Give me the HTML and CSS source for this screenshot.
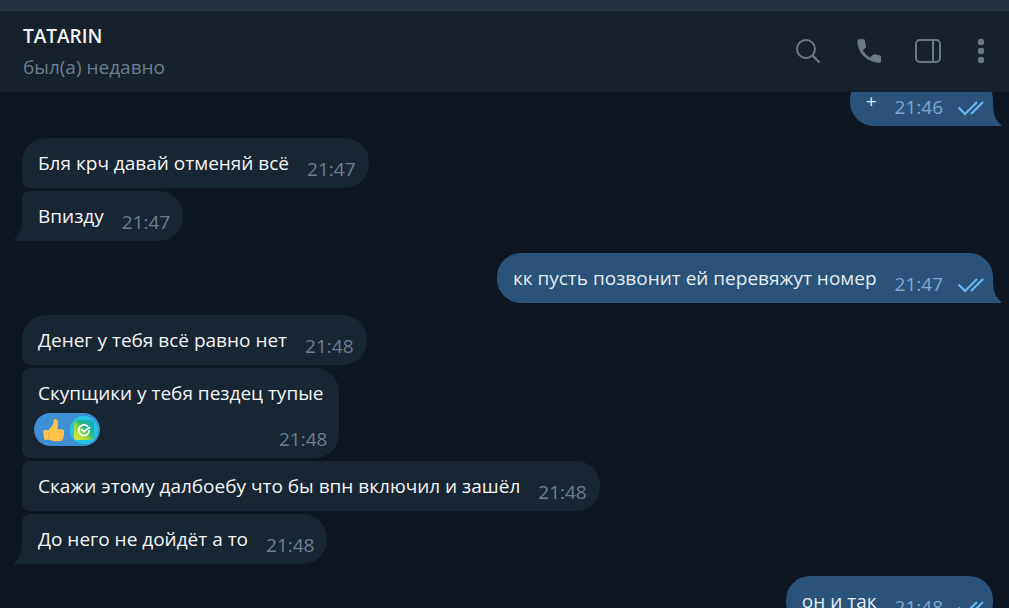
FILE: index.html
```html
<!DOCTYPE html>
<html lang="ru">
<head>
<meta charset="utf-8">
<meta name="viewport" content="width=device-width, initial-scale=1">
<title>TATARIN</title>
<link rel="stylesheet" href="styles.css">
</head>
<body>
<svg class="defs" aria-hidden="true">
  <symbol id="tail" viewBox="0 0 10 22"><path d="M0 0V22H8.200Q9 21.300 7.800 20.600Q0 15 0 0Z"/></symbol>
  <symbol id="checks" viewBox="0 0 28 18"><path d="M1.500 8.500L8 15L20 3M14 15L26 3" fill="none" stroke="currentColor" stroke-width="2.200"/></symbol>
</svg>
<div class="titlebar"></div>
<header class="header">
  <div class="contact">
    <h1 class="name">TATARIN</h1>
    <p class="status">был(а) недавно</p>
  </div>
  <div class="actions">
    <button class="action" type="button" aria-label="Поиск">
      <svg viewBox="0 0 32 32"><circle cx="13" cy="13" r="9" fill="none" stroke="currentColor" stroke-width="2"/><path d="M19.500 19.500L26.500 26.500" stroke="currentColor" stroke-width="2.400"/></svg>
    </button>
    <button class="action" type="button" aria-label="Позвонить">
      <svg viewBox="0 0 32 32"><path transform="translate(-.5 -.7)" fill="currentColor" d="M6.400 4H11Q12.400 4 12.500 5.400Q12.700 8.200 13.500 10.600Q13.800 11.600 13 12.400L10.200 15.100Q13.400 20.200 17.600 22.200L20.400 19.400Q21.200 18.700 22.200 19Q24.500 19.700 27.200 19.900Q28.600 20 28.600 21.400V26Q28.600 27.500 27.100 27.500Q17.500 27.300 11 20.800Q5 14.500 4.900 5.600Q4.900 4 6.400 4Z"/></svg>
    </button>
    <button class="action" type="button" aria-label="Информация о чате">
      <svg viewBox="0 0 32 32" fill="none" stroke="currentColor" stroke-width="2"><rect x="3" y="4" width="24" height="22" rx="4"/><path d="M20 4V26"/></svg>
    </button>
    <button class="action narrow" type="button" aria-label="Меню">
      <svg viewBox="0 0 16 32" fill="currentColor"><circle cx="8" cy="6" r="3.200"/><circle cx="8" cy="15" r="3.200"/><circle cx="8" cy="24" r="3.200"/></svg>
    </button>
  </div>
</header>
<main class="chat">
  <div class="history">
    <section class="group outgoing">
      <article class="bubble last"><p class="text">+</p><time class="time">21:46</time><svg class="checks"><use href="#checks"/></svg><svg class="tail"><use href="#tail"/></svg></article>
    </section>
    <section class="group incoming">
      <article class="bubble first"><p class="text">Бля крч давай отменяй всё</p><time class="time">21:47</time></article>
      <article class="bubble last"><p class="text">Впизду</p><time class="time">21:47</time><svg class="tail"><use href="#tail"/></svg></article>
    </section>
    <section class="group outgoing">
      <article class="bubble last"><p class="text">кк пусть позвонит ей перевяжут номер</p><time class="time">21:47</time><svg class="checks"><use href="#checks"/></svg><svg class="tail"><use href="#tail"/></svg></article>
    </section>
    <section class="group incoming">
      <article class="bubble first"><p class="text">Денег у тебя всё равно нет</p><time class="time">21:48</time></article>
      <article class="bubble reacted">
        <p class="text">Скупщики у тебя пездец тупые</p>
        <div class="footer">
          <button class="reaction" type="button" aria-label="Реакция: нравится">
            <svg class="thumb" viewBox="0 0 24 24"><path fill="#ffc34d" d="M2.300 12Q1 12.300 1.200 13.800L2 20.500Q2.200 22 3.700 22L7 21.500Q10 23.500 14 23.300H18.500Q21 23 20.900 20.700Q22.300 19.500 21.500 17.900Q22.800 16.500 21.900 15Q23 12.500 20.700 11.500Q19.800 11 15.400 11.200Q16.600 6.500 15.800 3.200Q15 .8 12.900 1Q11.600 1.200 11.600 3Q11.800 6.800 8.400 9.700Q7.300 10.700 6.700 12.200Z"/><path fill="none" stroke="#f0a838" stroke-width=".8" d="M7 13V20.500M15.400 11.200Q14.800 13 15.500 14.300M17 15H21.500M16.800 18H21M16.600 20.800H20.500"/></svg>
            <svg class="avatar" viewBox="0 0 28 28"><defs><linearGradient id="sber" x1="0" y1="1" x2="1" y2="0"><stop offset="0" stop-color="#f5e532"/><stop offset=".35" stop-color="#9bdc40"/><stop offset=".6" stop-color="#23b984"/><stop offset="1" stop-color="#16a6d8"/></linearGradient></defs><circle cx="14" cy="14" r="14" fill="#22c7e5"/><rect x="4" y="4" width="20" height="20" rx="3" fill="url(#sber)"/><path d="M17.900 10.600A5.300 5.300 0 1 0 19.300 14M11 13.200L14 15.400L20 11.200" fill="none" stroke="#fff" stroke-width="1.700"/></svg>
          </button>
          <time class="time">21:48</time>
        </div>
      </article>
      <article class="bubble"><p class="text">Скажи этому далбоебу что бы впн включил и зашёл</p><time class="time">21:48</time></article>
      <article class="bubble last"><p class="text">До него не дойдёт а то</p><time class="time">21:48</time><svg class="tail"><use href="#tail"/></svg></article>
    </section>
    <section class="group outgoing">
      <article class="bubble"><p class="text">он и так</p><time class="time">21:48</time><svg class="checks"><use href="#checks"/></svg></article>
    </section>
  </div>
</main>
</body>
</html>
```
FILE: styles.css
```css
* { box-sizing: border-box; }

body {
  margin: 0;
  height: 100vh;
  display: flex;
  flex-direction: column;
  overflow: hidden;
  background: #0e1621;
  color: #f5f5f5;
  font-family: "Open Sans", "Noto Sans", sans-serif;
  font-size: 19px;
  line-height: 26px;
}

h1, p { margin: 0; }

button {
  border: 0;
  padding: 0;
  background: none;
  color: inherit;
  cursor: pointer;
}

.defs { position: absolute; width: 0; height: 0; }

.titlebar {
  flex: none;
  height: 11px;
  background: #242f3d;
  border-bottom: 1px solid #2c3942;
}

.header {
  flex: none;
  display: flex;
  align-items: center;
  justify-content: space-between;
  padding: 9px 20px 9px 23px;
  background: #17212b;
}

.contact { display: flex; flex-direction: column; gap: 3px; padding: 2px 0; }
.name { font-size: 19px; line-height: 28px; font-weight: 600; }
.status { line-height: 28px; color: #6d7f8f; }

.actions { display: flex; gap: 28px; color: #6c7883; }
.action { width: 32px; height: 32px; }
.action.narrow { width: 16px; }
.action svg { display: block; width: 100%; height: 100%; }

.chat { flex: 1; min-height: 0; overflow: hidden; }

/* The history is scrolled slightly past the top of its first message. */
.history {
  display: flex;
  flex-direction: column;
  gap: 12px;
  margin-top: -16px;
  padding: 0 16px 0 22px;
}

.group { display: flex; flex-direction: column; gap: 3px; align-items: flex-start; }
.outgoing { align-items: flex-end; }

.bubble {
  position: relative;
  display: flex;
  align-items: flex-end;
  padding: 12px 13px 12px 16px;
  background: #182533;
  color: #f5f5f5;
  border-radius: 8px 24px 24px 8px;
}
.bubble.first { border-top-left-radius: 24px; }
.incoming .last { border-bottom-left-radius: 0; }

.outgoing .bubble {
  padding-right: 8px;
  background: #2b5278;
  color: #e4ecf2;
  border-radius: 24px;
}
.outgoing .last { border-bottom-right-radius: 0; }

.time { margin: 0 0 -6px 18px; color: #6d7f8f; }
.outgoing .time { color: #7da8d3; }

.checks { width: 28px; height: 18px; margin: 0 0 -3px 14px; color: #63b8f4; }

.tail {
  position: absolute;
  bottom: 0;
  width: 10px;
  height: 22px;
}
.incoming .tail { right: 100%; fill: #182533; transform: scaleX(-1); }
.outgoing .tail { left: 100%; fill: #2b5278; }

.bubble.reacted { flex-direction: column; align-items: stretch; gap: 7px; padding-right: 16px; }
.footer { display: flex; align-items: flex-end; justify-content: space-between; margin: 0 -4px; }

.reaction {
  display: flex;
  align-items: center;
  gap: 4px;
  height: 33px;
  padding: 0 2px 0 8px;
  border-radius: 17px;
  background: #3e8fd3;
}
.thumb { width: 24px; height: 24px; }
.avatar { width: 28px; height: 28px; }
```
